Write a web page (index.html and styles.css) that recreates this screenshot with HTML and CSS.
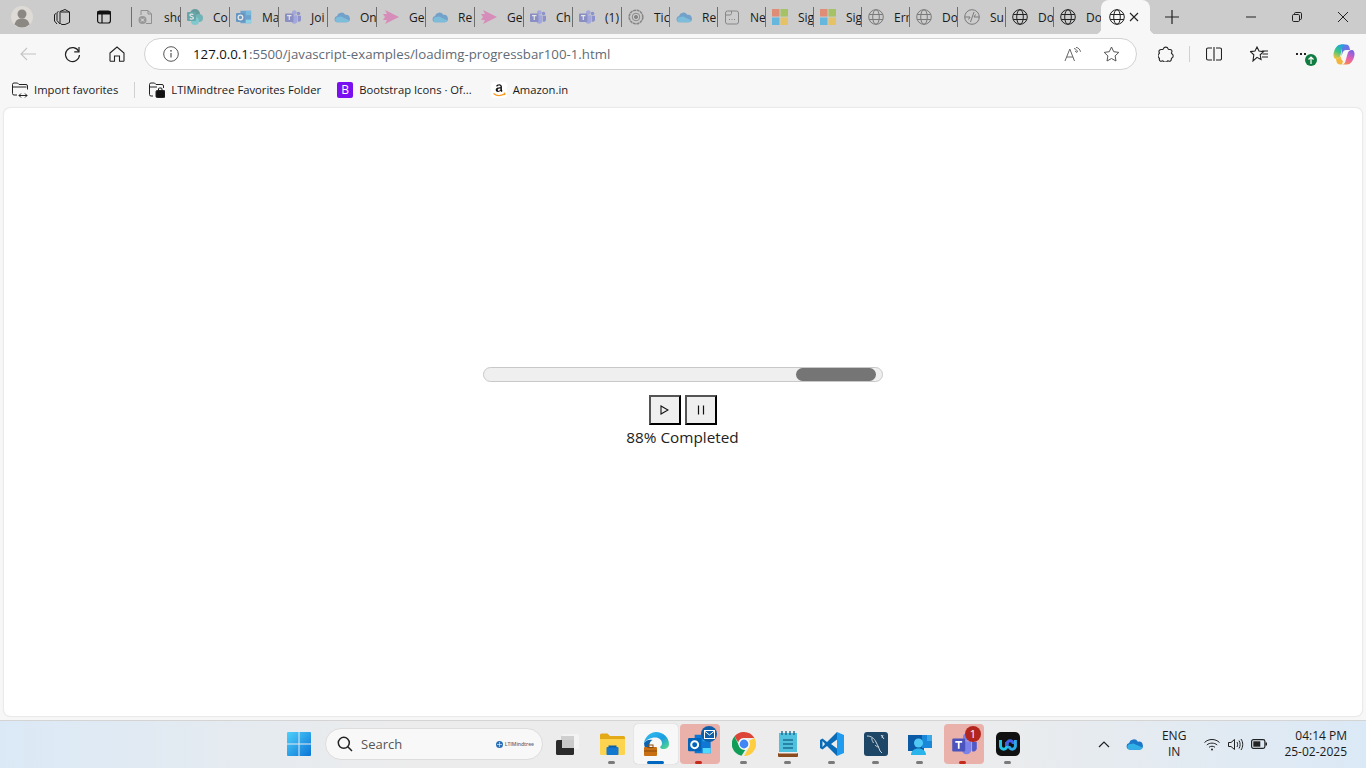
FILE: index.html
```html
<!DOCTYPE html>
<html lang="en">
<head>
  <meta charset="UTF-8">
  <title>Loading progress bar</title>
  <link rel="stylesheet" href="styles.css">
</head>
<body>

<!-- shared icons -->
<svg class="defs" width="0" height="0">
  <symbol id="globe" viewBox="0 0 16 16">
    <g fill="none" stroke="currentColor" stroke-width="1">
      <circle cx="8" cy="8" r="7.3"/>
      <ellipse cx="8" cy="8" rx="3.3" ry="7.3"/>
      <path d="M1.2 5.5h13.6M1.2 10.5h13.6"/>
    </g>
  </symbol>
  <symbol id="cloud" viewBox="0 0 18 12">
    <path fill="#1a78c8" d="M4 12a3.6 3.6 0 0 1-.6-7.1A5 5 0 0 1 12.6 3.6 4.2 4.2 0 0 1 14.5 12z"/>
    <path fill="#32b0e8" d="M4 12a3 3 0 0 1-.6-5.8L7.800 5.400 17.500 9.800A3.800 3.800 0 0 1 14.500 12z"/>
  </symbol>
  <symbol id="teams" viewBox="0 0 18 16">
    <circle cx="10.500" cy="3" r="2.600" fill="#7b83eb"/>
    <circle cx="15.200" cy="4" r="2" fill="#5059c9"/>
    <path fill="#7b83eb" d="M7 6h7v6a3.500 3.500 0 0 1-7 0z"/>
    <path fill="#5059c9" d="M14.500 6.500H18v4.500a2.500 2.500 0 0 1-3.500 2.200z"/>
    <rect x="0" y="4" width="9.500" height="9.500" rx="1" fill="#4b53bc"/>
    <path fill="none" stroke="#fff" stroke-width="1.300" d="M2.300 6.500h5M4.800 6.500v5"/>
  </symbol>
  <symbol id="msquares" viewBox="0 0 16 16">
    <rect width="7.500" height="7.500" fill="#f25022"/>
    <rect x="8.500" width="7.500" height="7.500" fill="#7fba00"/>
    <rect y="8.500" width="7.500" height="7.500" fill="#00a4ef"/>
    <rect x="8.500" y="8.500" width="7.500" height="7.500" fill="#ffb900"/>
  </symbol>
  <symbol id="arrow-pink" viewBox="0 0 16 14">
    <path fill="#e14fa8" d="M2 0l14 7-14 7 2-4H0l2-3-2-3h4z"/>
  </symbol>
  <symbol id="outlook" viewBox="0 0 18 16">
    <path fill="#0f78d4" d="M5 1h12v14H5z"/>
    <path fill="#28a8ea" d="M11 1h6v5h-6z"/>
    <path fill="#50d9ff" d="M11 11h6v4h-6z"/>
    <rect y="3.500" width="10" height="10" rx="1" fill="#0364b8"/>
    <circle cx="5" cy="8.500" r="2.600" fill="none" stroke="#fff" stroke-width="1.500"/>
  </symbol>
</svg>

<div class="tabstrip">
  <div class="avatar">
    <svg width="22" height="22" viewBox="0 0 22 22"><circle cx="11" cy="11" r="11" fill="#dedbd6"/><circle cx="11" cy="8" r="4.500" fill="#8b8782"/><path fill="#8b8782" d="M3.500 18.500c1-4.500 4-6 7.500-6s6.500 1.500 7.500 6a11 11 0 0 1-15 0z"/></svg>
  </div>
  <div class="strip-btn workspaces">
    <svg width="18" height="18" viewBox="0 0 18 18" fill="none" stroke="#1c1c1c" stroke-width="1"><path d="M3 5.500 1.500 6.500v6.500l2.500 3"/><path d="M5.500 3.500 4 4.500v8l3 3.500"/><path d="M7 3.500 12 1.500l4.500 2.500v10.500L12 16.500H8.500l-1.500-2z"/><path d="M7.500 4h9"/></svg>
  </div>
  <div class="strip-btn tabs-view">
    <svg width="16" height="16" viewBox="0 0 16 16" fill="none" stroke="#111" stroke-width="1.200"><rect x="1.600" y="2" width="12.800" height="12" rx="2.200"/><path fill="#111" d="M2 2.500h12v2.500H2z"/><path d="M6 5v9"/></svg>
  </div>

  <div class="tabs">
    <div class="tab"><svg class="tab-icon" viewBox="0 0 16 16" fill="none" stroke="#555"><path d="M3 6V1.500h7l3.500 3.500v9.500H8"/><path d="M10 1.500V5h3.500"/><circle cx="4.500" cy="11" r="4" fill="#666" stroke="none"/><path d="M3 9.500l3 3M6 9.500l-3 3" stroke="#fff"/></svg><span class="tab-title">sho</span></div>
    <div class="tab"><svg class="tab-icon" viewBox="0 0 16 16"><circle cx="8" cy="5" r="5" fill="#036c70"/><circle cx="12" cy="9" r="4" fill="#1a9ba1"/><circle cx="8" cy="12" r="4" fill="#37c6d0"/><rect y="3" width="9" height="9" rx="1" fill="#038387"/><path fill="none" stroke="#fff" stroke-width="1.200" d="M6.300 5.600C5.400 4.800 2.900 5 2.900 6.300c0 1.500 3.500 1 3.500 2.600 0 1.300-2.500 1.500-3.600.6"/></svg><span class="tab-title">Co</span></div>
    <div class="tab"><svg class="tab-icon"><use href="#outlook"/></svg><span class="tab-title">Ma</span></div>
    <div class="tab"><svg class="tab-icon"><use href="#teams"/></svg><span class="tab-title">Joi</span></div>
    <div class="tab"><svg class="tab-icon"><use href="#cloud"/></svg><span class="tab-title">On</span></div>
    <div class="tab"><svg class="tab-icon"><use href="#arrow-pink"/></svg><span class="tab-title">Ge</span></div>
    <div class="tab"><svg class="tab-icon"><use href="#cloud"/></svg><span class="tab-title">Re</span></div>
    <div class="tab"><svg class="tab-icon"><use href="#arrow-pink"/></svg><span class="tab-title">Ge</span></div>
    <div class="tab"><svg class="tab-icon"><use href="#teams"/></svg><span class="tab-title">Ch</span></div>
    <div class="tab"><svg class="tab-icon"><use href="#teams"/></svg><span class="tab-title">(1)</span></div>
    <div class="tab"><svg class="tab-icon" viewBox="0 0 16 16" fill="none" stroke="#444"><circle cx="8" cy="8" r="6.800" stroke-width="1.600" stroke-dasharray="3 .6"/><circle cx="8" cy="8" r="3.800"/><circle cx="8" cy="8" r="1.600" fill="#444"/></svg><span class="tab-title">Tic</span></div>
    <div class="tab"><svg class="tab-icon"><use href="#cloud"/></svg><span class="tab-title">Re</span></div>
    <div class="tab"><svg class="tab-icon" viewBox="0 0 16 16" fill="none" stroke="#444"><path d="M1.500 4a2 2 0 0 1 2-2h9a2 2 0 0 1 2 2v9a2 2 0 0 1-2 2h-9a2 2 0 0 1-2-2z"/><path d="M1.500 6h5l1-1.500V2"/><path d="M5 10.500h1M7.500 10.500h1M10 10.500h1"/></svg><span class="tab-title">Ne</span></div>
    <div class="tab"><svg class="tab-icon"><use href="#msquares"/></svg><span class="tab-title">Sig</span></div>
    <div class="tab"><svg class="tab-icon"><use href="#msquares"/></svg><span class="tab-title">Sig</span></div>
    <div class="tab"><svg class="tab-icon globe-grey"><use href="#globe"/></svg><span class="tab-title">Err</span></div>
    <div class="tab"><svg class="tab-icon globe-grey"><use href="#globe"/></svg><span class="tab-title">Do</span></div>
    <div class="tab"><svg class="tab-icon globe-grey" viewBox="0 0 16 16" fill="none" stroke="currentColor"><circle cx="8" cy="8" r="7.300"/><path d="M1 8h5l-1.500 2.500M15 8h-5l1.500-2.500M10 3 6.500 13"/></svg><span class="tab-title">Su</span></div>
    <div class="tab tab-solid"><svg class="tab-icon"><use href="#globe"/></svg><span class="tab-title">Do</span></div>
    <div class="tab tab-solid"><svg class="tab-icon"><use href="#globe"/></svg><span class="tab-title">Do</span></div>
  </div>

  <div class="tab-active">
    <svg class="tab-icon"><use href="#globe"/></svg>
    <svg class="tab-close" width="10" height="10" viewBox="0 0 10 10" stroke="#222" stroke-width="1.100"><path d="M1 1l8 8M9 1l-8 8"/></svg>
  </div>
  <div class="new-tab">
    <svg width="14" height="14" viewBox="0 0 14 14" stroke="#222" stroke-width="1.200"><path d="M7 0v14M0 7h14"/></svg>
  </div>

  <div class="window-btns">
    <div class="win-btn"><svg width="10" height="10" viewBox="0 0 10 10" stroke="#222"><path d="M0 5h10"/></svg></div>
    <div class="win-btn"><svg width="10" height="10" viewBox="0 0 10 10" fill="none" stroke="#222"><rect x=".5" y="2.500" width="7" height="7" rx="1.200"/><path d="M2.500 2.500V1.700A1.200 1.200 0 0 1 3.700.5h4.600a1.200 1.200 0 0 1 1.200 1.200v4.600a1.200 1.200 0 0 1-1.200 1.200h-.8"/></svg></div>
    <div class="win-btn"><svg width="10" height="10" viewBox="0 0 10 10" stroke="#222"><path d="M0 0l10 10M10 0L0 10"/></svg></div>
  </div>
</div>

<div class="toolbar">
  <div class="nav-btn nav-back">
    <svg width="16" height="14" viewBox="0 0 16 14" fill="none" stroke="#c4c4c4" stroke-width="1.100"><path d="M16 7H1M7 1 1 7l6 6"/></svg>
  </div>
  <div class="nav-btn nav-reload">
    <svg width="17" height="17" viewBox="0 0 17 17" fill="none" stroke="#222" stroke-width="1.200"><path d="M14.800 5.500A7 7 0 1 0 15.500 9"/><path d="M15 1v4.800h-4.800"/></svg>
  </div>
  <div class="nav-btn nav-home">
    <svg width="16" height="16" viewBox="0 0 16 16" fill="none" stroke="#222" stroke-width="1.100"><path d="M1 7 8 1l7 6v7.500a.7.700 0 0 1-.7.700H10.500V10h-5v5.200H1.700a.7.700 0 0 1-.7-.7z"/></svg>
  </div>
  <div class="address">
    <svg class="info-icon" width="16" height="16" viewBox="0 0 16 16" fill="none" stroke="#555"><circle cx="8" cy="8" r="7.300"/><path d="M8 7v4.500" stroke-width="1.200"/><circle cx="8" cy="4.800" r=".9" fill="#555" stroke="none"/></svg>
    <div class="url"><span class="url-host">127.0.0.1</span>:5500/javascript-examples/loadimg-progressbar100-1.html</div>
    <svg class="read-icon" width="17" height="15" viewBox="0 0 17 15" fill="none" stroke="#666"><path d="M1 14 5.800 2 10.500 14M2.700 10h6.300"/><path d="M10 1.500c2 .5 3 1.500 3.500 3.500M11 4c1 .3 1.500.8 1.800 1.800"/><path d="M12 .3c2.500.5 4 2 4.500 4.500"/></svg>
    <svg class="star-icon" width="17" height="16" viewBox="0 0 17 16" fill="none" stroke="#555"><path d="M8.500 1l2.200 4.700 5.100.7-3.700 3.500.9 5.100-4.500-2.500L4 15l.9-5.100L1.200 6.400l5.100-.7z"/></svg>
  </div>
  <div class="tool-btn tool-ext">
    <svg width="16" height="16" viewBox="0 0 16 16" fill="none" stroke="#222" stroke-width="1.100"><path d="M5.500 2.600C6 .6 9.500.6 10 2.600c.2.800.8 1 1.500.9 2-.3 3 1.200 2.100 3-.3.500-.2 1 .3 1.300 1.700 1.100 1.700 3.300 0 4.200-.5.300-.7.700-.6 1.300.2 1.500-1.400 2.500-2.800 1.700-.6-.3-1-.2-1.400.3-1 1-2.700 1-3.600 0-.4-.5-.9-.6-1.500-.3C2.600 15.700 1 14.500 1.400 13c.1-.6 0-1-.5-1.300-1.200-.9-1.200-3 0-3.800.5-.3.600-.8.300-1.300C.4 4.800 1.500 3.300 3.800 3.500c.8.100 1.500-.1 1.700-.9z"/></svg>
  </div>
  <div class="tool-sep"></div>
  <div class="tool-btn tool-split">
    <svg width="16" height="14" viewBox="0 0 16 14" fill="none" stroke="#222" stroke-width="1.100"><path d="M8 0v14M6 1H2a1.500 1.500 0 0 0-1.500 1.500v9A1.500 1.500 0 0 0 2 13h4M10 13h4a1.500 1.500 0 0 0 1.500-1.500v-9A1.500 1.500 0 0 0 14 1h-4"/></svg>
  </div>
  <div class="tool-btn tool-fav">
    <svg width="18" height="16" viewBox="0 0 18 16" fill="none" stroke="#222" stroke-width="1.100"><path d="M7 1l2 4 4.500.6-3.300 3.200.8 4.700L7 11.300 3 15l.8-6.200L.5 5.600 5 5z"/><path d="M12 5h6M12.500 8H18M12 11h6"/></svg>
  </div>
  <div class="tool-btn tool-more">
    <span class="more-dots"></span>
    <span class="update-dot">
      <svg width="8" height="8" viewBox="0 0 8 8" stroke="#fff" stroke-width="1.200" fill="none"><path d="M4 8V1M1.500 3.500 4 1l2.500 2.500"/></svg>
    </span>
  </div>
  <div class="tool-btn tool-copilot">
    <svg width="22" height="21" viewBox="0 0 22 21">
      <defs>
        <linearGradient id="cpA" x1="0.700" y1="0" x2="0.300" y2="1"><stop offset="0" stop-color="#1f9fe8"/><stop offset=".5" stop-color="#35c48a"/><stop offset="1" stop-color="#f2c53d"/></linearGradient>
        <linearGradient id="cpB" x1="0.700" y1="0" x2="0.300" y2="1"><stop offset="0" stop-color="#7a62ea"/><stop offset=".55" stop-color="#e65fb2"/><stop offset="1" stop-color="#f58a4a"/></linearGradient>
        <linearGradient id="cpC" x1="0" y1="0" x2="1" y2="1"><stop offset="0" stop-color="#3c8ce8"/><stop offset="1" stop-color="#a05be0"/></linearGradient>
      </defs>
      <path fill="url(#cpC)" d="M8 .5h5c2 0 3 1 3.500 3L17 6h-4c-1.500 0-3 1-3.500 3l-1 3L9 4z"/>
      <path fill="url(#cpA)" d="M8 .5h4.500c-1.800 0-2.800 1.500-3.300 3.500L7.500 11c-.7 2.500-2 4-4.500 4C1.500 15 .1 13 .5 10 1.300 5 4 .5 8 .5z"/>
      <path fill="#f2b53d" d="M3 15c2 0 3.500-1 4.500-3l.5 2c.4 1.500 1 2.500 2 3l-1 3.500H7c-2 0-3-1-3.500-3z"/>
      <path fill="url(#cpB)" d="M14 20.500H9c2 0 3-1.500 3.500-3.500l2-7c.7-2.500 2-4 4.500-4 1.500 0 2.900 2 2.500 5-.8 4.500-3.500 9.500-7.500 9.500z"/>
    </svg>
  </div>
</div>

<div class="bookmarks">
  <div class="bookmark">
    <svg class="bm-icon" viewBox="0 0 16 16" fill="none" stroke="#222"><path d="M5 13H2a1.500 1.500 0 0 1-1.500-1.500v-9A1.500 1.500 0 0 1 2 1h3.500l1.500 1.500h7A1.500 1.500 0 0 1 15.500 4v3.500"/><path d="M.5 5h14M7 13.500h8M9 11.500l-2 2 2 2M13 11.500l2 2-2 2"/></svg>
    <span>Import favorites</span>
  </div>
  <div class="bm-sep"></div>
  <div class="bookmark">
    <svg class="bm-icon" viewBox="0 0 16 16" fill="none" stroke="#222"><path d="M4 14H2a1.500 1.500 0 0 1-1.500-1.500v-10A1.500 1.500 0 0 1 2 1h3.500L7 2.500h6A1.500 1.500 0 0 1 14.500 4v2"/><path d="M.5 5H8"/><rect x="7" y="8.500" width="9" height="7" rx="1.200" fill="#111"/><path d="M9.500 8.500V7a1 1 0 0 1 1-1h1.500a1 1 0 0 1 1 1v1.500" stroke="#111"/></svg>
    <span>LTIMindtree Favorites Folder</span>
  </div>
  <div class="bookmark bookmark-wide">
    <span class="bm-bootstrap">B</span>
    <span>Bootstrap Icons · Of...</span>
  </div>
  <div class="bookmark">
    <span class="bm-amazon">
      <svg class="bm-icon" viewBox="0 0 16 16"><rect width="16" height="16" rx="3" fill="#fff"/><path fill="#111" d="M8.300 2.200c-1.700 0-3 .7-3.300 2l1.500.2c.2-.6.800-1 1.600-1 .9 0 1.400.4 1.400 1.300v.5c-2.300.1-4.800.5-4.800 2.600 0 1.400 1 2.200 2.300 2.200 1.200 0 1.900-.5 2.500-1.200.3.500.5.800.9 1.100l1.200-1c-.4-.4-.7-.8-.7-1.400V4.600c0-1.500-1.200-2.400-2.600-2.400zm1.200 4.400c0 1.300-.6 2.300-1.700 2.300-.7 0-1.100-.5-1.100-1.200 0-1.100 1.200-1.300 2.800-1.300z"/><path fill="none" stroke="#f79a1e" stroke-width="1.300" d="M2.500 11.500c3 2.400 7.500 2.500 11 .3M13.500 10.700l.3 1.700-1.700.1"/></svg>
    </span>
    <span>Amazon.in</span>
  </div>
</div>

<div class="page">
  <div class="card">
    <div class="player">
      <div class="progress">
        <div class="progress-block"></div>
      </div>
      <div class="controls">
        <button class="ctrl">
          <svg width="9" height="10" viewBox="0 0 9 10" fill="none" stroke="#111" stroke-width="1.100"><path d="M1 1v8l7-4z"/></svg>
        </button>
        <button class="ctrl">
          <svg width="8" height="10" viewBox="0 0 8 10" stroke="#111" stroke-width="1.200"><path d="M1.500 .5v9M6.500 .5v9"/></svg>
        </button>
      </div>
      <div class="status">88% Completed</div>
    </div>
  </div>
</div>

<div class="taskbar">
  <div class="task-apps">
    <div class="task-app">
      <svg width="24" height="24" viewBox="0 0 24 24">
        <defs><linearGradient id="winG" x1="0" y1="0" x2="1" y2="1"><stop offset="0" stop-color="#4fd0fb"/><stop offset="1" stop-color="#0a74d6"/></linearGradient></defs>
        <path fill="url(#winG)" d="M0 1a1 1 0 0 1 1-1h10.500v11.500H0zM12.500 0H23a1 1 0 0 1 1 1v10.500H12.500zM0 12.500h11.500V24H1a1 1 0 0 1-1-1zM12.500 12.500H24V23a1 1 0 0 1-1 1H12.500z"/>
      </svg>
    </div>
    <div class="search">
      <svg width="16" height="16" viewBox="0 0 16 16" fill="none" stroke="#222" stroke-width="1.500"><circle cx="6.800" cy="6.800" r="5.500"/><path d="M10.800 10.800 15 15"/></svg>
      <span class="search-label">Search</span>
      <span class="search-logo">
        <svg width="7" height="7" viewBox="0 0 7 7"><circle cx="3.500" cy="3.500" r="3.500" fill="#2a6fb5"/><path d="M1 3.500h5M3.500 1v5" stroke="#fff" stroke-width=".6"/></svg>
        <span class="search-logo-text">LTIMindtree</span>
      </span>
    </div>
    <div class="task-app">
      <svg width="24" height="22" viewBox="0 0 24 22"><rect x="6" y="1" width="17" height="15" rx="1.500" fill="#f3f3f3"/><rect x="5" y="3" width="13" height="12" fill="#cfcfcf"/><rect x="0" y="7" width="18" height="15" rx="1.500" fill="#2b2b2b"/><rect x="6" y="7" width="12" height="8" fill="#c9c9c9"/></svg>
    </div>
    <div class="task-app has-dot">
      <svg width="25" height="22" viewBox="0 0 25 22"><path fill="#e3a916" d="M0 2a1.500 1.500 0 0 1 1.500-1.500h6l2.500 2.500h13.500A1.500 1.500 0 0 1 25 4.500V8H0z"/><path fill="#fcd44f" d="M0 6h25v14.500a1.500 1.500 0 0 1-1.500 1.500h-22A1.500 1.500 0 0 1 0 20.500z"/><rect x="6.500" y="14" width="12" height="8" rx="1" fill="#1277cf"/><rect x="8.500" y="12.500" width="8" height="2" fill="#0c5ea8"/></svg>
    </div>
    <div class="task-app task-on">
      <svg width="25" height="25" viewBox="0 0 25 25">
        <defs><linearGradient id="edgeG" x1="0" y1="0" x2="1" y2="1"><stop offset="0" stop-color="#35c1f1"/><stop offset=".55" stop-color="#1b9de2"/><stop offset="1" stop-color="#5ae07c"/></linearGradient></defs>
        <path fill="url(#edgeG)" d="M12 0c7 0 13 5 13 12 0 3-2.200 5-5.500 5-2.200 0-3.300-.8-3.300-1.800 0-1 1.800-1.400 1.800-3.700C18 8 15 5.500 11.500 5.500 6 5.500 2 8 0 11 1 5 6 0 12 0z"/>
        <path fill="#0b63b0" d="M0 11c2-3 6-4 8.500-3C6 9 5 12 5.500 14.500L7 20H5C2 18 0 15 0 11z"/>
        <rect x="0" y="15" width="13" height="9" rx="1" fill="#c86f13"/>
        <rect x="4" y="13" width="5" height="2.500" fill="none" stroke="#8a4b0c"/>
        <path d="M0 19h13" stroke="#8a4b0c"/>
      </svg>
    </div>
    <div class="task-app task-alert outlook-app">
      <svg width="24" height="22" viewBox="0 0 18 16"><use href="#outlook"/></svg>
      <span class="mail-badge"><svg width="11" height="9" viewBox="0 0 11 9" fill="none" stroke="#fff"><rect x=".5" y=".5" width="10" height="8"/><path d="M.5 1 5.500 5l5-4"/></svg></span>
    </div>
    <div class="task-app has-dot">
      <svg width="24" height="24" viewBox="0 0 24 24"><path fill="#db4437" d="M12 0a12 12 0 0 1 10.400 6H12a6 6 0 0 0-5.800 4.500L2.500 4.300A12 12 0 0 1 12 0z"/><path fill="#ffcd40" d="M22.400 6A12 12 0 0 1 12 24l5.200-9a6 6 0 0 0-.2-6z"/><path fill="#0f9d58" d="M2.500 4.300 7.700 15a6 6 0 0 0 5.500 2.900L9.500 23.700A12 12 0 0 1 2.500 4.300z"/><circle cx="12" cy="12" r="5.500" fill="#fff"/><circle cx="12" cy="12" r="4.400" fill="#4285f4"/></svg>
    </div>
    <div class="task-app has-dot">
      <svg width="20" height="26" viewBox="0 0 20 26"><rect x="1" y="2" width="18" height="22" fill="#4fc0dd"/><rect y="22" width="20" height="4" rx="1" fill="#8a4b1e"/><rect x="1" y="21" width="18" height="1.500" fill="#eee"/><path d="M4 0v4M8 0v4M12 0v4M16 0v4" stroke="#1a5f85" stroke-width="1.300"/><path d="M5 9h10M5 13h10M5 17h10" stroke="#1d6f92" stroke-width="1.500"/></svg>
    </div>
    <div class="task-app has-dot">
      <svg width="24" height="24" viewBox="0 0 24 24"><path fill="#0a6cb8" fill-rule="evenodd" d="M17 0 7 10 2.500 6.500 0 8v8l2.500 1.500L7 14l10 10V16.500L11 12l6-4.500zM2.500 9 5 12l-2.500 3z"/><path fill="#1f9cf0" d="M17 0l7 3v18l-7 3z"/></svg>
    </div>
    <div class="task-app has-dot">
      <svg width="24" height="24" viewBox="0 0 24 24"><rect width="24" height="24" rx="3" fill="#1e4666"/><path fill="none" stroke="#c9d6df" stroke-width="1" d="M3 4c4 0 7 2 9 6s3 6 4 9l2 2M8 6c-.5 2 .5 3 1.500 5M15 15c-2 0-3-1-4-2M17 3l3 4M19 3l-1 3"/></svg>
    </div>
    <div class="task-app has-dot">
      <svg width="24" height="24" viewBox="0 0 24 24"><rect y="3" width="16" height="16" fill="#0a5aa5"/><rect x="14" y="3" width="10" height="13" fill="#1a88d8"/><rect x="19" y="3" width="5" height="6" fill="#3aa9ea"/><circle cx="10.500" cy="11" r="4.500" fill="#50c8f5"/><path fill="#29b4ec" d="M3 23c0-4 3-6.500 7.500-6.500S18 19 18 23z"/></svg>
    </div>
    <div class="task-app task-alert">
      <svg width="25" height="22" viewBox="0 0 18 16"><use href="#teams"/></svg>
      <span class="count-badge">1</span>
    </div>
    <div class="task-app has-dot">
      <svg width="24" height="24" viewBox="0 0 24 24"><rect width="24" height="24" rx="5" fill="#111"/><path fill="none" stroke="#23c6e8" stroke-width="3" d="M4.500 8v6a3.200 3.200 0 0 0 6.400 0V10"/><path fill="none" stroke="#4460e8" stroke-width="3" d="M10.900 14v-2a3.200 3.200 0 0 1 6.400 0"/><path fill="none" stroke="#2ea9e8" stroke-width="3" d="M13 14a3.200 3.200 0 0 0 6.400 0V8"/></svg>
    </div>
  </div>

  <div class="tray">
    <svg class="tray-chevron" width="12" height="7" viewBox="0 0 12 7" fill="none" stroke="#222" stroke-width="1.200"><path d="M1 6l5-5 5 5"/></svg>
    <svg class="tray-cloud" width="17" height="12"><use href="#cloud"/></svg>
    <div class="tray-lang"><span>ENG</span><span>IN</span></div>
    <svg class="tray-wifi" width="16" height="13" viewBox="0 0 16 13" fill="none" stroke="#222"><path d="M.5 4.500C4.500.5 11.500.5 15.500 4.500M2.800 7C5.500 4.500 10.500 4.500 13.200 7M5 9.300c1.600-1.400 4.400-1.400 6 0"/><circle cx="8" cy="11.500" r="1" fill="#222" stroke="none"/></svg>
    <svg class="tray-vol" width="16" height="13" viewBox="0 0 16 13" fill="none" stroke="#222"><path d="M.5 4.500h2.500L6.500 1.500v10L3 8.500H.5zM9 4c.8 1.500.8 3.500 0 5M11 2.500c1.500 2.500 1.500 5.500 0 8M13 1c2.300 3.300 2.300 7.700 0 11"/></svg>
    <svg class="tray-batt" width="16" height="10" viewBox="0 0 16 10"><rect x=".6" y=".6" width="13.300" height="8.800" rx="1.800" fill="none" stroke="#222" stroke-width="1.200"/><rect x="2.300" y="2.300" width="7" height="5.400" fill="#222"/><rect x="14.500" y="3.500" width="1.500" height="3" fill="#222"/></svg>
    <div class="tray-clock"><span>04:14 PM</span><span>25-02-2025</span></div>
  </div>
</div>

</body>
</html>
```

FILE: styles.css
```css
* {
  box-sizing: border-box;
}
html, body {
  margin: 0;
  height: 768px;
  overflow: hidden;
}
body {
  display: flex;
  flex-direction: column;
  width: 1366px;
  background: #f7f7f7;
  color: #1a1a1a;
  font-family: "Open Sans", "Noto Sans", sans-serif;
}
.defs {
  position: absolute;
}

/* tab strip */
.tabstrip {
  display: flex;
  align-items: center;
  height: 34px;
  background: #cccccc;
}
.avatar {
  display: flex;
  justify-content: center;
  width: 22px;
  margin-left: 11px;
}
.strip-btn {
  display: flex;
}
.workspaces {
  margin-left: 20px;
}
.tabs-view {
  margin-left: 25px;
}
.tabs {
  display: flex;
  flex: 0 0 970px;
  min-width: 0;
  height: 20px;
  margin-left: 19px;
}
.tab {
  display: flex;
  flex: 0 0 48px;
  align-items: center;
  min-width: 0;
  padding-left: 6px;
  border-left: 1px solid #6e6e6e;
  overflow: hidden;
}
.tab:nth-child(-n+10) {
  flex-basis: 49px;
}
.tab-icon {
  flex: none;
  width: 16px;
  height: 16px;
  color: #222;
  opacity: .5;
}
.tab-solid .tab-icon {
  opacity: 1;
}
.globe-grey {
  color: #444;
  opacity: .6;
}
.tab-title {
  margin-left: 10px;
  font-size: 12px;
  white-space: nowrap;
}
.tab-active {
  position: relative;
  display: flex;
  align-items: center;
  align-self: flex-end;
  width: 49px;
  height: 34px;
  padding-left: 8px;
  background: #f7f7f7;
  border-radius: 8px 8px 0 0;
}
.tab-active::before, .tab-active::after {
  content: "";
  position: absolute;
  bottom: 0;
  width: 6px;
  height: 6px;
}
.tab-active::before {
  left: -6px;
  background: radial-gradient(circle at 0 0, transparent 6px, #f7f7f7 6.5px);
}
.tab-active::after {
  right: -6px;
  background: radial-gradient(circle at 100% 0, transparent 6px, #f7f7f7 6.5px);
}
.tab-active .tab-icon {
  opacity: 1;
}
.tab-close {
  margin-left: 4px;
}
.new-tab {
  display: flex;
  margin-left: 15px;
}
.window-btns {
  display: flex;
  margin-left: auto;
}
.win-btn {
  display: flex;
  justify-content: center;
  width: 46px;
}

/* toolbar */
.toolbar {
  display: flex;
  align-items: center;
  height: 38px;
  padding-top: 2px;
}
.nav-btn {
  display: flex;
}
.nav-back {
  margin-left: 20px;
}
.nav-reload {
  margin-left: 28px;
}
.nav-home {
  margin-left: 28px;
}
.address {
  display: flex;
  align-items: center;
  width: 993px;
  height: 32px;
  margin-left: 19px;
  padding-left: 18px;
  background: #fff;
  border: 1px solid #d2d2d2;
  border-radius: 16px;
}
.url {
  margin-left: 14px;
  font-size: 13.25px;
  color: #5f6b76;
  white-space: nowrap;
}
.url-host {
  color: #111;
}
.read-icon {
  margin-left: auto;
}
.star-icon {
  margin-left: 22px;
  margin-right: 16px;
}
.tool-btn {
  display: flex;
  align-items: center;
}
.tool-ext {
  margin-left: 21px;
}
.tool-sep {
  width: 1px;
  height: 16px;
  margin-left: 15px;
  background: #d0d0d0;
}
.tool-split {
  margin-left: 16px;
}
.tool-fav {
  margin-left: 28px;
}
.tool-more {
  position: relative;
  width: 20px;
  margin-left: 28px;
}
.more-dots {
  width: 12px;
  height: 2px;
  background: radial-gradient(circle at 1px 1px, #222 1px, transparent 1.2px) 0 0 / 4px 2px;
}
.update-dot {
  position: absolute;
  top: 1px;
  left: 9px;
  display: flex;
  align-items: center;
  justify-content: center;
  width: 12px;
  height: 12px;
  background: #107c41;
  border-radius: 50%;
}
.tool-copilot {
  margin-left: 17px;
}

/* favorites bar */
.bookmarks {
  display: flex;
  align-items: center;
  height: 35px;
  padding-left: 12px;
  font-size: 11.25px;
}
.bookmark {
  display: flex;
  align-items: center;
  gap: 6px;
  margin-right: 16px;
  white-space: nowrap;
}
.bookmark-wide {
  margin-right: 19px;
}
.bm-icon {
  width: 16px;
  height: 16px;
}
.bm-sep {
  width: 1px;
  height: 16px;
  margin: 0 14px 0 0;
  background: #d0d0d0;
}
.bm-bootstrap {
  display: flex;
  align-items: center;
  justify-content: center;
  width: 16px;
  height: 16px;
  background: #7a0ff0;
  color: #fff;
  font-size: 12px;
  border-radius: 2px;
}
.bm-amazon {
  display: flex;
}

/* page area */
.page {
  flex: 1;
  padding: 1px 4px 4px;
}
.card {
  display: flex;
  justify-content: center;
  height: 608px;
  background: #fff;
  border-radius: 6px;
  box-shadow: 0 0 2px rgba(0, 0, 0, .2);
}
.player {
  display: flex;
  flex-direction: column;
  align-items: center;
  margin-top: 259px;
  margin-left: -1px;
}
.progress {
  width: 400px;
  height: 15px;
  background: #efefef;
  border: 1px solid #c8c8c8;
  border-radius: 8px;
}
.progress-block {
  width: 80px;
  height: 13px;
  margin-left: 312px;
  background: #757575;
  border-radius: 7px;
}
.controls {
  display: flex;
  gap: 4px;
  margin-top: 13px;
}
.ctrl {
  display: flex;
  align-items: center;
  justify-content: center;
  width: 32px;
  height: 30px;
  padding: 0;
  background: #efefef;
  border: 2px outset #000;
}
.status {
  font-size: 15.3px;
  line-height: 24px;
  color: #222;
}

/* taskbar */
.taskbar {
  display: flex;
  align-items: center;
  height: 48px;
  padding-bottom: 1px;
  background: linear-gradient(to right, #dbe9f6, #ececec 30%, #ececec 70%, #dbe9f6);
  border-top: 1px solid #d4d4d4;
}
.task-apps {
  display: flex;
  align-items: center;
  margin-left: 277px;
}
.task-app {
  position: relative;
  display: flex;
  align-items: center;
  justify-content: center;
  width: 44px;
  height: 40px;
  border-radius: 4px;
}
.has-dot::after, .task-on::after, .task-alert::after {
  content: "";
  position: absolute;
  bottom: 0;
  left: 18px;
  width: 7px;
  height: 3px;
  background: #7a7a7a;
  border-radius: 2px;
}
.task-on {
  background: #f7f7f7;
  box-shadow: 0 0 1px rgba(0, 0, 0, .25);
}
.task-on::after {
  left: 13px;
  width: 17px;
  background: #0067c0;
}
.task-alert {
  width: 40px;
  margin: 0 2px;
  background: #eab0aa;
}
.task-alert::after {
  left: 15px;
  background: #c42b1c;
}
.search {
  display: flex;
  align-items: center;
  width: 218px;
  height: 32px;
  margin: 0 3px 0 4px;
  padding: 0 8px 0 11px;
  background: #f8f8f8;
  border: 1px solid #dcdcdc;
  border-radius: 16px;
}
.search-label {
  margin-left: 8px;
  font-size: 13px;
  color: #555;
}
.search-logo {
  display: flex;
  align-items: center;
  gap: 2px;
  margin-left: auto;
}
.search-logo-text {
  font-size: 5px;
  font-weight: 600;
  color: #667;
}
.mail-badge {
  position: absolute;
  top: 2px;
  right: 3px;
  display: flex;
  align-items: center;
  justify-content: center;
  width: 16px;
  height: 16px;
  background: #0f5fa8;
  border-radius: 50%;
}
.count-badge {
  position: absolute;
  top: 2px;
  right: 3px;
  width: 16px;
  height: 16px;
  background: #b3261e;
  color: #fff;
  font-size: 11px;
  line-height: 16px;
  text-align: center;
  border-radius: 50%;
}
.tray {
  display: flex;
  align-items: center;
  margin-left: auto;
  padding-right: 19px;
  font-size: 12px;
}
.tray-cloud {
  margin-left: 16px;
}
.tray-lang, .tray-clock {
  display: flex;
  flex-direction: column;
  line-height: 16px;
}
.tray-lang {
  align-items: center;
  margin-left: 19px;
}
.tray-wifi {
  margin-left: 18px;
}
.tray-vol {
  margin-left: 8px;
}
.tray-batt {
  margin-left: 7px;
}
.tray-clock {
  align-items: flex-end;
  margin-left: 17px;
}
```
